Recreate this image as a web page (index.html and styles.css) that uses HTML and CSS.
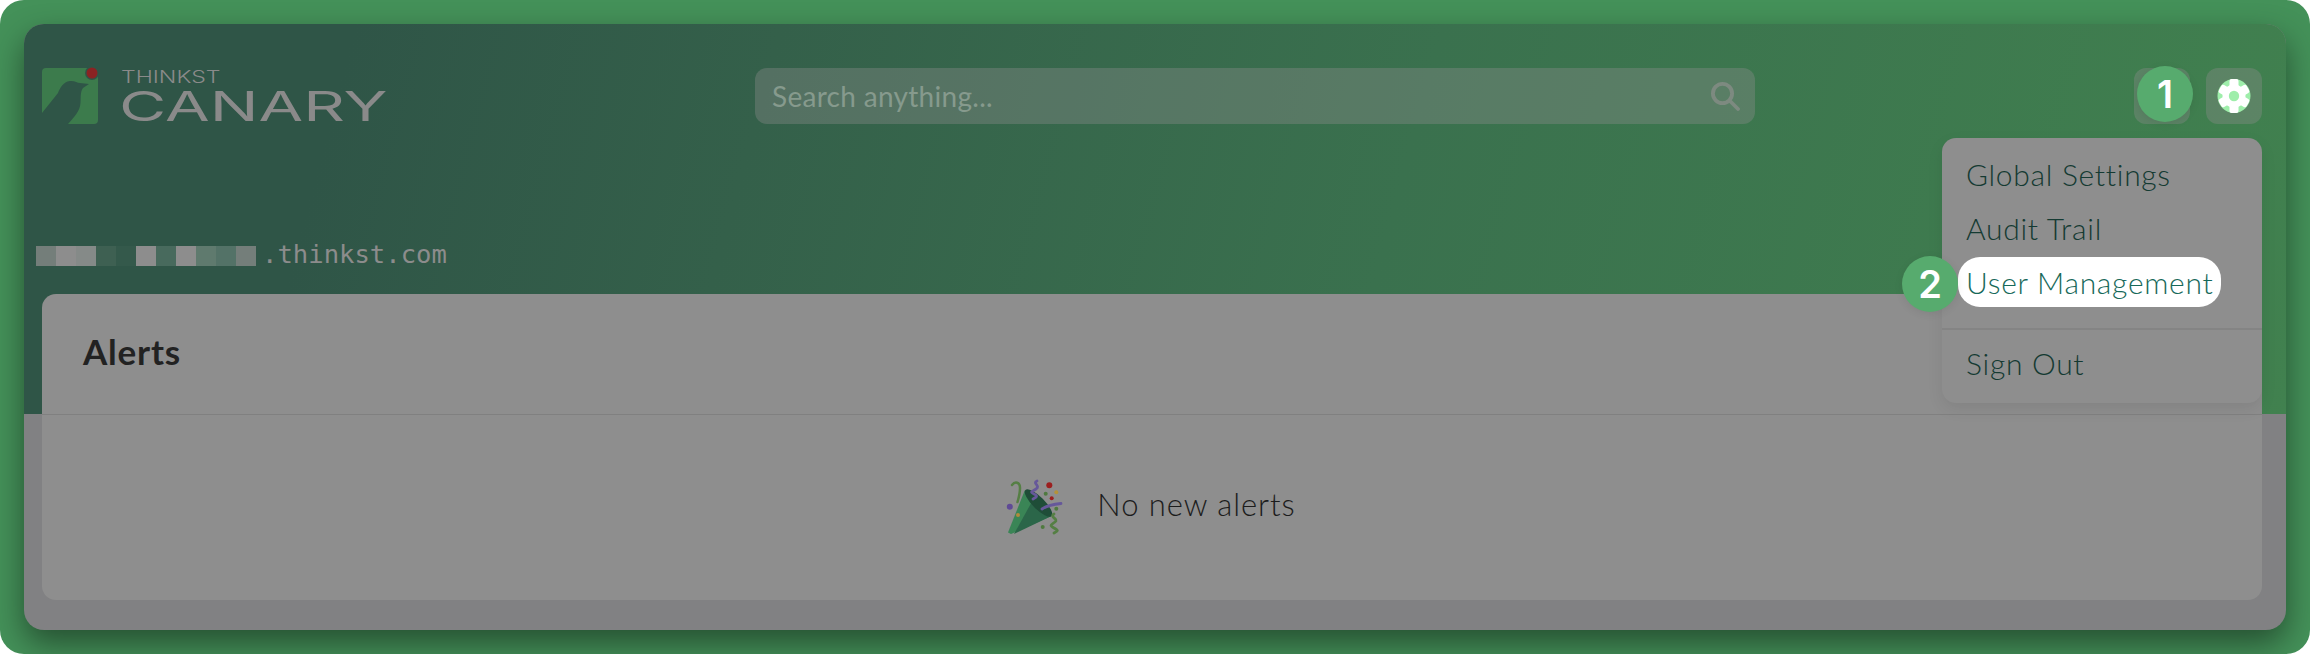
FILE: index.html
```html
<!DOCTYPE html>
<html>

<head>
    <title>Thinkst Canary</title>
    <meta charset="UTF-8">
    <link rel="stylesheet" href="styles.css">
</head>

<body>
    <div class="frame">
        <div class="window">
            <div class="header">
                <div class="topbar">
                    <div class="brand">
                        <svg class="logo" width="56" height="56" viewBox="0 0 56 56">
                            <path d="M4 0H52a4 4 0 0 1 4 4V52a4 4 0 0 1-4 4H4a4 4 0 0 1-4-4V4a4 4 0 0 1 4-4z" fill="#3c7b4c" />
                            <path d="M0 45 16 25C18 20 21 14 28 13 33 12.500 35 15 38 15L47 16 41 20C38 24 39 30 38.500 35 38 43 33 48 26 56H0z" fill="#2f5547" />
                            <circle cx="50" cy="5" r="7" fill="#2f5648" />
                            <circle cx="50" cy="5" r="5.500" fill="#8b2323" />
                        </svg>
                        <div class="wordmark">
                            <span class="word-small">THINKST</span>
                            <span class="word-big">CANARY</span>
                        </div>
                    </div>
                    <div class="search">
                        <span>Search anything...</span>
                        <svg width="29" height="29" viewBox="0 0 29 29" fill="none" stroke="#7d8a80" stroke-width="3.800" stroke-linecap="round">
                            <circle cx="11.500" cy="11.500" r="9.600" />
                            <path d="M19 19l8 8" />
                        </svg>
                    </div>
                    <div class="actions">
                        <div class="icon-btn"></div>
                        <div class="icon-btn">
                            <svg width="34" height="36" viewBox="0 0 34 36">
                                <ellipse cx="17" cy="18" rx="16.500" ry="17" fill="#9eeeaa" />
                                <g fill="#fff">
                                    <circle cx="17" cy="18" r="11.500" />
                                    <rect x="12.500" y="1" width="9" height="34" rx="2" />
                                    <rect x="12.500" y="2" width="9" height="32" rx="2" transform="rotate(60 17 18)" />
                                    <rect x="12.500" y="2" width="9" height="32" rx="2" transform="rotate(120 17 18)" />
                                </g>
                                <circle cx="17" cy="18" r="5.200" fill="#9eeeaa" />
                            </svg>
                        </div>
                    </div>
                </div>
                <div class="domain">
                    <div class="pixels">
                        <i class="px-a"></i><i class="px-b"></i><i class="px-c"></i><i class="px-d"></i><i class="px-e"></i><i class="px-b"></i><i class="px-g"></i><i class="px-b"></i><i class="px-h"></i><i class="px-j"></i><i class="px-a"></i>
                    </div>
                    <span>.thinkst.com</span>
                </div>
            </div>

            <div class="card">
                <div class="card-title">Alerts</div>
                <div class="card-body">
                    <svg width="58" height="58" viewBox="0 0 58 58" fill="none" stroke-linecap="round">
                        <path d="M2 53.500 18.700 11.500 45.500 37 5 55z" fill="#3a8556" />
                        <path d="M8 55 28 19 45.500 37z" fill="#2b6649" />
                        <ellipse cx="32.500" cy="24" rx="6" ry="18.500" transform="rotate(-45 32.500 24)" fill="#1f4d38" />
                        <path d="M6 6c3-4 8-3 8 3 0 5-1 9-2.500 14" stroke="#557f44" stroke-width="2.500" />
                        <path d="M31 2c-5 2 4 5-1 8s-6 3-2 5 3 3-1 5" stroke="#66589a" stroke-width="2.800" />
                        <path d="M36 30c6-4 12-5 19-5.500" stroke="#66589a" stroke-width="2.800" />
                        <path d="M48 35c-5 3 5 5 1 8s-6 3-1 6 4 3 0 5" stroke="#557f44" stroke-width="2.800" />
                        <circle cx="3.800" cy="27.700" r="3" fill="#5f4a96" />
                        <circle cx="43.300" cy="6.300" r="3" fill="#9c1f1f" />
                        <circle cx="39.700" cy="14.700" r="2" fill="#4f7a3f" />
                        <circle cx="50.300" cy="13.300" r="2" fill="#b3923a" />
                        <circle cx="45.700" cy="19.300" r="2" fill="#9c1f1f" />
                        <circle cx="50.300" cy="29.700" r="2" fill="#4f7a3f" />
                        <circle cx="36.700" cy="48" r="2" fill="#4f7a3f" />
                        <circle cx="12" cy="36" r="2" fill="#b08a3c" />
                    </svg>
                    <span>No new alerts</span>
                </div>
            </div>

            <div class="menu">
                <a class="menu-item">Global Settings</a>
                <a class="menu-item">Audit Trail</a>
                <a class="menu-item active">User Management</a>
                <hr>
                <a class="menu-item">Sign Out</a>
            </div>
        </div>

        <div class="badge badge-one">1</div>
        <div class="badge badge-two">2</div>
    </div>
</body>

</html>
```

FILE: styles.css
```css
html, body {
    margin: 0;
    background: #fff;
}
.frame {
    position: relative;
    width: 2310px;
    height: 654px;
    box-sizing: border-box;
    padding: 24px;
    background: #449159;
    border-radius: 24px;
    overflow: hidden;
    font-family: Lato, "Liberation Sans", sans-serif;
}
.window {
    position: relative;
    height: 606px;
    background: #818183;
    border-radius: 20px;
    overflow: hidden;
    box-shadow: 0 14px 32px rgba(0,0,0,0.45);
}
.header {
    height: 390px;
    box-sizing: border-box;
    padding-top: 44px;
    background: linear-gradient(105deg, #2f5547 0%, #2f5547 14%, #34604a 32%, #3a714e 60%, #41814f 100%);
}
.topbar {
    display: flex;
    align-items: flex-start;
    padding: 0 24px 0 18px;
}
.brand {
    display: flex;
    width: 343px;
    height: 56px;
    flex-shrink: 0;
}
.logo {
    flex-shrink: 0;
    overflow: visible;
}
.wordmark {
    display: flex;
    flex-direction: column;
    margin-left: 21px;
    color: #8a8a8a;
    font-family: Inter, "Liberation Sans", sans-serif;
    line-height: 1;
}
.word-small {
    font-size: 17px;
    font-weight: 300;
    height: 19px;
    margin: 1px 0 0 2px;
    transform: scaleX(1.36);
    transform-origin: left;
}
.word-big {
    font-size: 41px;
    font-weight: 400;
    transform: scaleX(1.58);
    transform-origin: left;
}
.search {
    display: flex;
    align-items: center;
    justify-content: space-between;
    width: 1000px;
    height: 56px;
    box-sizing: border-box;
    padding: 0 15px 0 17px;
    margin-left: 370px;
    border-radius: 12px;
    background: rgba(140,140,140,0.37);
    color: #869a8d;
    font-size: 28px;
    letter-spacing: 0.3px;
}
.actions {
    display: flex;
    gap: 16px;
    margin-left: auto;
}
.icon-btn {
    display: flex;
    align-items: center;
    justify-content: center;
    width: 56px;
    height: 56px;
    border-radius: 12px;
    background: rgba(140,140,140,0.37);
}
.domain {
    display: flex;
    align-items: center;
    margin-top: 122px;
    padding-left: 12px;
    color: #8c8c8c;
    font-family: "DejaVu Sans Mono", monospace;
    font-size: 25.600px;
    line-height: 20px;
}
.domain span {
    margin-left: 6px;
    position: relative;
    top: -2px;
}
.pixels {
    display: flex;
}
.pixels i {
    display: block;
    width: 20px;
    height: 20px;
}
.px-a { background: #747e7a; }
.px-b { background: #8d8d8d; }
.px-c { background: #858a88; }
.px-d { background: #3e6052; }
.px-e { background: #34594b; }
.px-g { background: #486a5d; }
.px-h { background: #5f7a6e; }
.px-j { background: #537267; }
.card {
    display: flex;
    flex-direction: column;
    height: 306px;
    margin: -120px 24px 0 18px;
    background: #8e8e8e;
    border-radius: 14px;
}
.card-title {
    height: 121px;
    box-sizing: border-box;
    padding: 35px 0 0 41px;
    border-bottom: 1px solid #808080;
    color: #222;
    font-size: 35px;
    font-weight: 700;
    letter-spacing: 0.8px;
    line-height: 44px;
}
.card-body {
    display: flex;
    align-items: center;
    justify-content: center;
    gap: 33px;
    flex: 1;
    padding-right: 2px;
    color: #1c1c1c;
    font-size: 31px;
    font-weight: 300;
    letter-spacing: 0.950px;
}
.card-body span {
    padding-bottom: 8px;
}
.menu {
    position: absolute;
    top: 114px;
    right: 24px;
    width: 320px;
    height: 265px;
    box-sizing: border-box;
    padding: 11px 16px;
    background: #8e8e8e;
    border-radius: 14px;
    box-shadow: 0 6px 16px rgba(0,0,0,0.08);
}
.menu hr {
    height: 2px;
    margin: 21px -16px 8px;
    border: none;
    background: #848484;
}
.menu-item {
    display: block;
    width: fit-content;
    height: 50px;
    margin-bottom: 4px;
    padding: 0 8px;
    border-radius: 22px;
    color: #143a32;
    font-size: 30px;
    font-weight: 300;
    letter-spacing: 0.7px;
    line-height: 50px;
}
.menu-item.active {
    background: #fff;
    color: #17695a;
}
.badge {
    position: absolute;
    display: flex;
    align-items: center;
    justify-content: center;
    width: 56px;
    height: 56px;
    border-radius: 50%;
    background: #57ab6e;
    box-shadow: 0 2px 8px rgba(0,0,0,0.08);
    color: #fff;
    font-family: Inter, "Liberation Sans", sans-serif;
    font-size: 38px;
    font-weight: 600;
}
.badge-one {
    top: 66px;
    left: 2137px;
}
.badge-two {
    top: 256px;
    left: 1902px;
}
```
